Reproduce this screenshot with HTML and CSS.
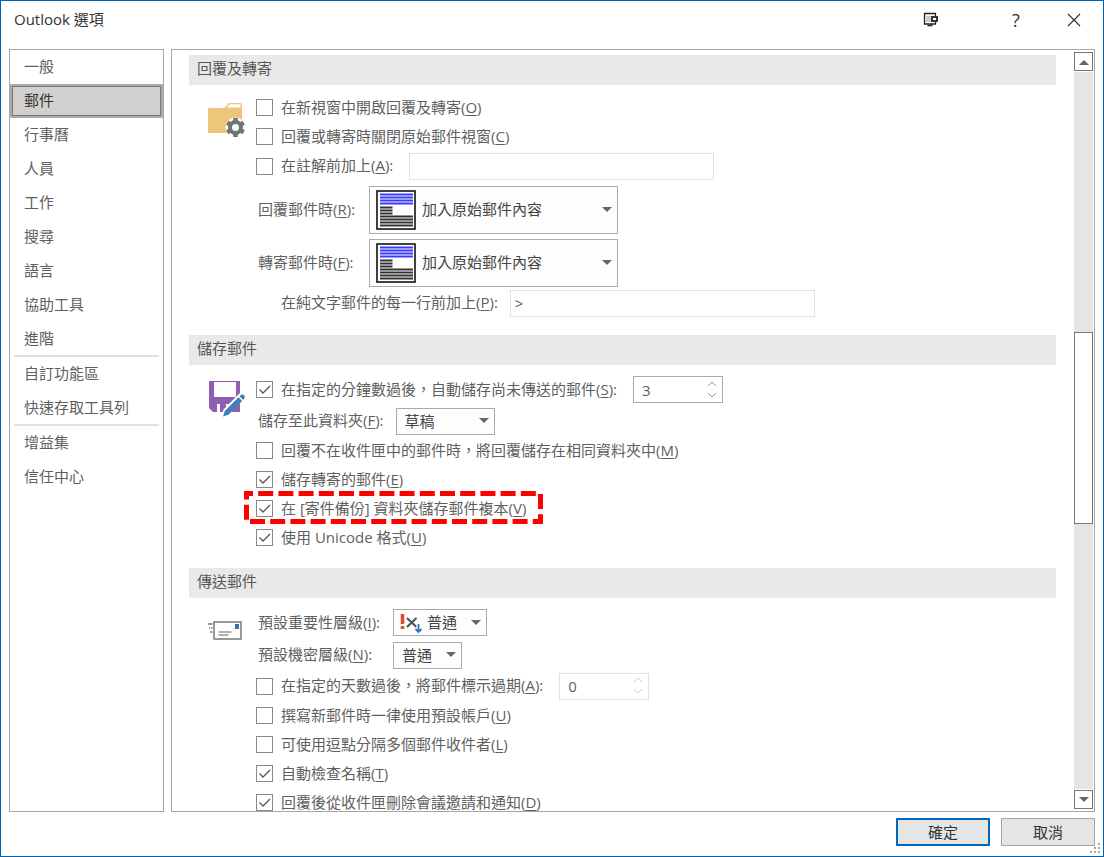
FILE: index.html
```
<!DOCTYPE html>
<html lang="zh-Hant">
<head>
    <meta charset="UTF-8">
    <meta name="viewport" content="width=device-width, initial-scale=1.0">
    <title>Outlook 選項</title>
    <link rel="stylesheet" href="styles.css">
</head>
<body>
<div class="dialog">
    <header class="titlebar">
        <h1>Outlook 選項</h1>
        <button class="tool tray" type="button" aria-label="顯示模式">
            <svg width="16" height="16" viewBox="0 0 16 16" fill="none" stroke="#222">
                <path d="M12.500 4V1.500h-11v10.500h11V9.500" stroke-width="1.300"/>
                <path d="M4 4v6M6 4v6M8 4v6" stroke="#999"/>
                <path d="M4.500 13.500h5" stroke-width="1.500"/>
                <rect x="9" y="5" width="5" height="4" fill="#fff" stroke-width="1.800"/>
            </svg>
        </button>
        <button class="tool help" type="button" aria-label="說明">?</button>
        <button class="tool" type="button" aria-label="關閉">
            <svg width="14" height="14" viewBox="0 0 14 14" stroke="#333" stroke-width="1.200"><path d="M1 1l12 12M13 1L1 13"/></svg>
        </button>
    </header>

    <div class="main">
        <nav class="side">
            <a href="#">一般</a>
            <a href="#" class="active">郵件</a>
            <a href="#">行事曆</a>
            <a href="#">人員</a>
            <a href="#">工作</a>
            <a href="#">搜尋</a>
            <a href="#">語言</a>
            <a href="#">協助工具</a>
            <a href="#">進階</a>
            <hr>
            <a href="#">自訂功能區</a>
            <a href="#">快速存取工具列</a>
            <hr>
            <a href="#">增益集</a>
            <a href="#">信任中心</a>
        </nav>

        <div class="panel">
            <div class="content">
                <!-- 回覆及轉寄 -->
                <section class="group">
                    <h2>回覆及轉寄</h2>
                    <div class="body">
                        <svg class="icon" width="40" height="40" viewBox="0 -1 40 40">
                            <path d="M1 8.500q0-1.500 1.500-1.500H17l5-5h11.500q1.500 0 1.500 1.500V32H1z" fill="#edc67c"/>
                            <path d="M19.500 6.500l3.500-3.300h10.500V6.500z" fill="#fff"/>
                            <circle cx="28.500" cy="26.500" r="10" fill="#fff"/>
                            <circle cx="28.500" cy="26.500" r="5.500" fill="none" stroke="#737373" stroke-width="4"/>
                            <path d="M28.500 17v4M28.500 32v4M20.300 21.800l3.400 2M33.300 29.200l3.400 2M20.300 31.200l3.400-2M33.300 23.800l3.400-2" stroke="#737373" stroke-width="4.500"/>
                        </svg>
                        <div class="rows">
                            <div class="row"><input type="checkbox" id="c1"><label for="c1">在新視窗中開啟回覆及轉寄(<u>O</u>)</label></div>
                            <div class="row"><input type="checkbox" id="c2"><label for="c2">回覆或轉寄時關閉原始郵件視窗(<u>C</u>)</label></div>
                            <div class="row mid">
                                <input type="checkbox" id="c3"><label for="c3">在註解前加上(<u>A</u>):</label>
                                <input class="text" type="text" aria-label="註解" disabled>
                            </div>
                            <div class="row big">
                                <label class="name short" for="s1">回覆郵件時(<u>R</u>):</label>
                                <div class="picker wide">
                                    <svg width="40" height="40" viewBox="0 0 40 40">
                                        <rect x="1" y="1" width="38" height="38" fill="#fff" stroke="#111" stroke-width="1.600"/>
                                        <path d="M4 4.500h33M4 7.500h33M4 10.500h33M4 13.500h33" stroke="#3a3aff" stroke-width="1.800"/>
                                        <path d="M4 17.500h12.500M4 20.500h12.500M4 23.500h12.500M4 26.500h33M4 29.500h33M4 32.500h33M4 35.500h33" stroke="#333" stroke-width="1.800"/>
                                    </svg>
                                    <select id="s1"><option>加入原始郵件內容</option></select>
                                </div>
                            </div>
                            <div class="row big">
                                <label class="name short" for="s2">轉寄郵件時(<u>F</u>):</label>
                                <div class="picker wide">
                                    <svg width="40" height="40" viewBox="0 0 40 40">
                                        <rect x="1" y="1" width="38" height="38" fill="#fff" stroke="#111" stroke-width="1.600"/>
                                        <path d="M4 4.500h33M4 7.500h33M4 10.500h33M4 13.500h33" stroke="#3a3aff" stroke-width="1.800"/>
                                        <path d="M4 17.500h12.500M4 20.500h12.500M4 23.500h12.500M4 26.500h33M4 29.500h33M4 32.500h33M4 35.500h33" stroke="#333" stroke-width="1.800"/>
                                    </svg>
                                    <select id="s2"><option>加入原始郵件內容</option></select>
                                </div>
                            </div>
                            <div class="row tall indent">
                                <label for="t1">在純文字郵件的每一行前加上(<u>P</u>):</label>
                                <input class="text" type="text" id="t1" value="&gt;">
                            </div>
                        </div>
                    </div>
                </section>

                <!-- 儲存郵件 -->
                <section class="group">
                    <h2>儲存郵件</h2>
                    <div class="body">
                        <svg class="icon" width="40" height="40" viewBox="0 0 40 40">
                            <path d="M2 1h31v31H6l-4-4z" fill="#915db1"/>
                            <path d="M7 2h22v15H7zM10 24h15v8H10z" fill="#fff"/>
                            <path d="M13 24h6v8h-6z" fill="#915db1"/>
                            <path d="M14 37l2.500-7.500L34 12l5 5L21 34.500z" fill="#fff"/>
                            <path d="M16 36.500l1.800-5.500L31.500 17.300l3.700 3.700L21.500 34.700zM32.500 16.300l1.500-1.500q1.500-1 3 .5t.5 3L36.200 20z" fill="#3d7fba"/>
                        </svg>
                        <div class="rows">
                            <div class="row head">
                                <input type="checkbox" id="c4" checked><label for="c4">在指定的分鐘數過後，自動儲存尚未傳送的郵件(<u>S</u>):</label>
                                <input class="spin" type="number" value="3" aria-label="分鐘數">
                            </div>
                            <div class="row mid">
                                <label class="name" for="s3">儲存至此資料夾(<u>F</u>):</label>
                                <select class="box folder" id="s3"><option>草稿</option></select>
                            </div>
                            <div class="row"><input type="checkbox" id="c5"><label for="c5">回覆不在收件匣中的郵件時，將回覆儲存在相同資料夾中(<u>M</u>)</label></div>
                            <div class="row"><input type="checkbox" id="c6" checked><label for="c6">儲存轉寄的郵件(<u>E</u>)</label></div>
                            <div class="row marked">
                                <input type="checkbox" id="c7" checked><label for="c7">在 [寄件備份] 資料夾儲存郵件複本(<u>V</u>)</label>
                                <svg class="mark" width="299" height="34" viewBox="0 0 299 34">
                                    <rect x="2.500" y="2.500" width="294" height="28" fill="none" stroke="#f00" stroke-width="5" stroke-dasharray="15 5.200" stroke-dashoffset="8.500"/>
                                </svg>
                            </div>
                            <div class="row"><input type="checkbox" id="c8" checked><label for="c8">使用 Unicode 格式(<u>U</u>)</label></div>
                        </div>
                    </div>
                </section>

                <!-- 傳送郵件 -->
                <section class="group">
                    <h2>傳送郵件</h2>
                    <div class="body">
                        <svg class="icon" width="40" height="40" viewBox="0 0 40 40">
                            <rect x="7" y="9" width="27" height="17" fill="#fff" stroke="#777" stroke-width="1.500"/>
                            <path d="M11.500 19h13M11.500 22h10" stroke="#999" stroke-width="1.300"/>
                            <rect x="28" y="11" width="4" height="5" fill="#2e74b5"/>
                            <path d="M1 11h4.500M2 15h1M4 15h1.500M3 19h2.500" stroke="#777" stroke-width="1.300"/>
                        </svg>
                        <div class="rows">
                            <div class="row head">
                                <label class="name long" for="s4">預設重要性層級(<u>I</u>):</label>
                                <div class="picker level">
                                    <svg width="22" height="22" viewBox="0 0 22 22" fill="none">
                                        <path d="M2.500 2v10M2.500 14v3" stroke="#d8502d" stroke-width="3.500"/>
                                        <path d="M7 6l9.500 9M16.500 6L7 15" stroke="#555" stroke-width="2.200"/>
                                        <path d="M18.500 11v8M15.500 16.500l3 3 3-3" stroke="#fff" stroke-width="4"/>
                                        <path d="M18.500 12v8M15.500 17l3 3 3-3" stroke="#2e74b5" stroke-width="1.800"/>
                                    </svg>
                                    <select id="s4"><option>普通</option></select>
                                </div>
                            </div>
                            <div class="row tall">
                                <label class="name long" for="s5">預設機密層級(<u>N</u>):</label>
                                <select class="box secret" id="s5"><option>普通</option></select>
                            </div>
                            <div class="row mid">
                                <input type="checkbox" id="c9"><label for="c9">在指定的天數過後，將郵件標示過期(<u>A</u>):</label>
                                <input class="spin" type="number" value="0" aria-label="天數" disabled>
                            </div>
                            <div class="row"><input type="checkbox" id="c10"><label for="c10">撰寫新郵件時一律使用預設帳戶(<u>U</u>)</label></div>
                            <div class="row"><input type="checkbox" id="c11"><label for="c11">可使用逗點分隔多個郵件收件者(<u>L</u>)</label></div>
                            <div class="row"><input type="checkbox" id="c12" checked><label for="c12">自動檢查名稱(<u>T</u>)</label></div>
                            <div class="row"><input type="checkbox" id="c13" checked><label for="c13">回覆後從收件匣刪除會議邀請和通知(<u>D</u>)</label></div>
                        </div>
                    </div>
                </section>
            </div>

            <div class="scroll">
                <button type="button" aria-label="向上捲動"><svg width="10" height="6" viewBox="0 0 10 6"><path d="M0 6l5-5 5 5z" fill="#666"/></svg></button>
                <div class="track">
                    <div class="before"></div>
                    <div class="thumb"></div>
                    <div class="after"></div>
                </div>
                <button type="button" aria-label="向下捲動"><svg width="10" height="6" viewBox="0 0 10 6"><path d="M0 0l5 5 5-5z" fill="#666"/></svg></button>
            </div>
        </div>
    </div>

    <footer class="footer">
        <button class="btn primary" type="button">確定</button>
        <button class="btn" type="button">取消</button>
    </footer>
    <svg class="grip" width="12" height="12" viewBox="0 0 12 12" fill="#aaa">
        <path d="M8 0h2v2H8zM4 4h2v2H4zM8 4h2v2H8zM0 8h2v2H0zM4 8h2v2H4zM8 8h2v2H8z"/>
    </svg>
</div>
</body>
</html>
```

FILE: styles.css
```
*{ box-sizing: border-box;}
body{ margin: 0;}
body, button, input, select{ font-family: "Open Sans", "Noto Sans CJK TC", sans-serif; font-size: 15px; line-height: 20px; color: #5f5f5f;}
h1, h2{ margin: 0; font-size: 15px; font-weight: normal;}
button, input, select{ margin: 0; padding: 0; border-radius: 0; appearance: none;}
a{ color: inherit; text-decoration: none;}
svg{ display: block; flex: none;}
u{ text-underline-offset: 2px;}

.dialog{ position: relative; display: flex; flex-direction: column; height: 100vh; border: 1px solid #0063b1; background: #fff;}

.titlebar{ display: flex; align-items: center; height: 38px; margin-bottom: 10px; padding: 0 7px 0 13px;}
.titlebar h1{ flex: 1; padding-bottom: 2px; color: #333;}
.tool{ display: flex; align-items: center; justify-content: center; width: 44px; height: 30px; margin-left: 14px; border: 0; background: none; color: #333;}
.tray{ margin-right: 27px;}
.help{ font-size: 18px;}

.main{ display: flex; flex: 1; gap: 7px; min-height: 0; padding: 0 8px;}
.side{ width: 155px; flex: none; border: 1px solid #a6a6a6;}
.side a{ display: flex; align-items: center; height: 34px; padding: 0 14px 2px;}
.side .active{ padding: 0 12px 2px; border: 2px solid #ababab; outline: 1px solid #777; outline-offset: -3px; background: #d2d0ce; color: #333;}
.side hr{ height: 2px; margin: -1px 4px 0; border: 0; background: #e1e1e1;}

.panel{ display: flex; flex: 1; min-width: 0; border: 1px solid #a6a6a6;}
.content{ flex: 1; min-width: 0; margin-right: 18px; padding: 5px 0 0 17px; overflow: hidden;}
.group{ padding-bottom: 16px;}
.group h2{ height: 30px; padding: 3px 8px; background: #e9e9e9; color: #555;}
.body{ display: flex; padding: 8px 0 0 18px;}
.icon{ margin: 7px 9px 0 0;}
.rows{ flex: 1;}

.row{ display: flex; align-items: center; height: 29px; white-space: nowrap;}
.row label{ padding-bottom: 2px;}
.row.mid{ height: 30px;}
.row.tall{ height: 32px;}
.row.head{ height: 33px;}
.row.big{ height: 53px; padding-top: 4px;}
.row.indent{ padding-left: 25px;}
.name{ margin-left: 2px;}
.name.short{ width: 99px;}
.name.long{ width: 123px;}

input[type=checkbox]{ width: 17px; height: 17px; flex: none; margin-right: 8px; border: 1px solid #8a8a8a; background: #fff;}
input[type=checkbox]:checked{ background: url('data:image/svg+xml,<svg xmlns="http://www.w3.org/2000/svg" width="15" height="15" fill="none" stroke="%23555" stroke-width="1.3"><path d="M2.5 7.500l3.500 3.500 7-7"/></svg>') center no-repeat;}

.text, .spin, .box, .picker{ height: 27px; margin-left: 12px; border: 1px solid #ababab; background: #fff;}
input ~ .text, input ~ .spin{ margin-left: 16px;}
.text{ width: 305px; padding: 0 4px; border-color: #e1e1e1;}
.spin{ width: 90px; padding: 0 8px; background: url('data:image/svg+xml,<svg xmlns="http://www.w3.org/2000/svg" width="10" height="18" fill="none" stroke="%23999"><path d="M1 5l4-4 4 4M1 12l4 4 4-4"/></svg>') right 5px center no-repeat;}
.spin::-webkit-inner-spin-button{ appearance: none;}
.spin:disabled{ border-color: #e1e1e1; background-image: url('data:image/svg+xml,<svg xmlns="http://www.w3.org/2000/svg" width="10" height="18" fill="none" stroke="%23ccc"><path d="M1 5l4-4 4 4M1 12l4 4 4-4"/></svg>');}
select{ border: 0; color: #444; background: url('data:image/svg+xml,<svg xmlns="http://www.w3.org/2000/svg" width="10" height="6" fill="%23666"><path d="M0 0h10L5 5z"/></svg>') right 5px center no-repeat;}
.box{ padding: 0 8px 1px; background: #fdfdfd url('data:image/svg+xml,<svg xmlns="http://www.w3.org/2000/svg" width="10" height="6" fill="%23666"><path d="M0 0h10L5 5z"/></svg>') right 5px center no-repeat;}
.folder{ width: 99px;}
.secret{ width: 69px;}
.picker{ display: flex; align-items: center; padding-left: 6px; background: #fdfdfd;}
.picker select{ flex: 1; height: 100%; padding: 0 0 2px 6px;}
.picker.wide{ width: 249px; height: 48px;}
.picker.level{ width: 94px;}
.level select{ padding-left: 5px;}

.marked{ position: relative;}
.mark{ position: absolute; left: -12px; top: -3px; pointer-events: none;}

.scroll{ display: flex; flex-direction: column; gap: 1px; width: 19px; margin: 2px 1px 2px 0;}
.scroll button{ display: flex; align-items: center; justify-content: center; height: 19px; border: 1px solid #777; background: #fff;}
.track{ display: flex; flex: 1; flex-direction: column; background: #e5e5e5;}
.before{ flex: 261;}
.thumb{ flex: 192; border: 1px solid #777; background: #fff;}
.after{ flex: 266;}

.footer{ display: flex; justify-content: flex-end; gap: 11px; padding: 6px 8px 10px;}
.btn{ width: 94px; height: 28px; border: 1px solid #a6a6a6; background: #e5e5e5; color: #333;}
.btn.primary{ border: 2px solid #0067c0;}
.grip{ position: absolute; right: 1px; bottom: 1px;}
```
